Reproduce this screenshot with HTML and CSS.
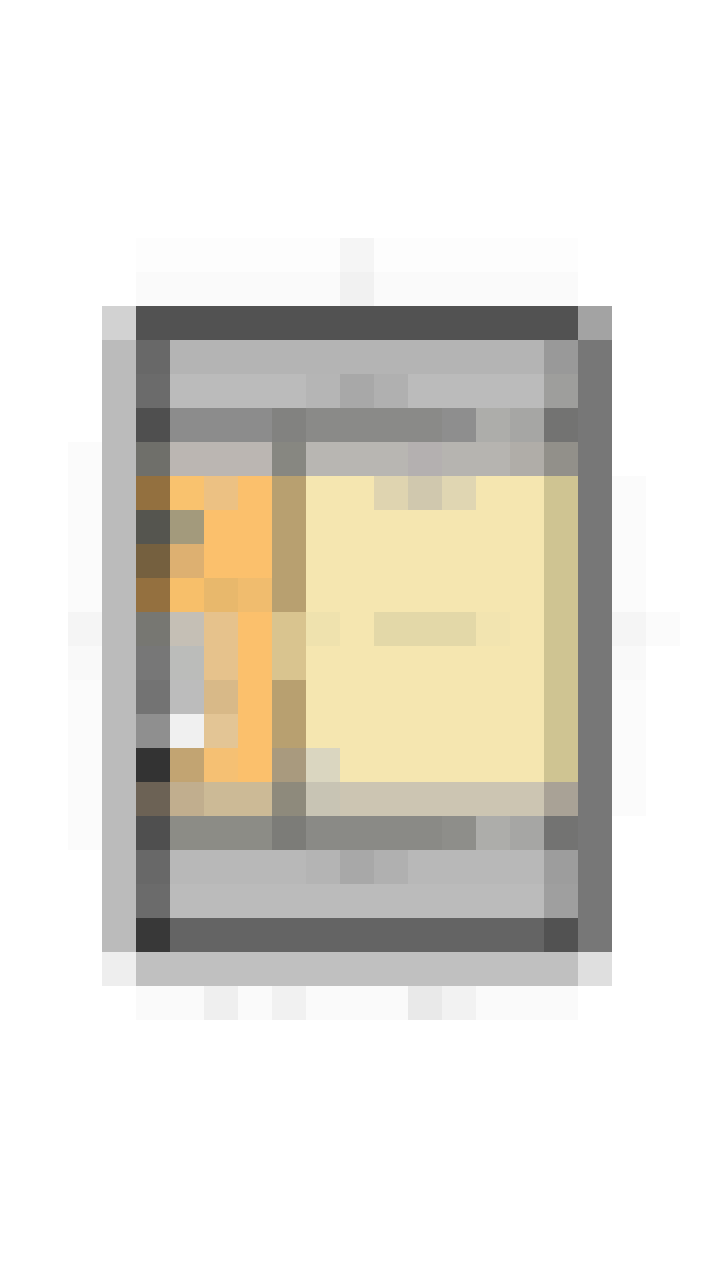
FILE: index.html
```html
<!DOCTYPE html>
<html lang="en">
<head>
<meta charset="utf-8">
<title>Pixel art</title>
<link rel="stylesheet" href="styles.css">
</head>
<body>
<svg class="art" viewBox="0 0 720 1280" width="720" height="1280" shape-rendering="crispEdges" xmlns="http://www.w3.org/2000/svg">
<!-- faint halo -->
<rect x="136" y="238" width="442" height="34" fill="#fdfdfd"/>
<rect x="340" y="238" width="34" height="34" fill="#f5f5f5"/>
<rect x="136" y="272" width="442" height="34" fill="#fafafa"/>
<rect x="340" y="272" width="34" height="34" fill="#f1f1f1"/>
<rect x="68" y="442" width="34" height="408" fill="#fbfbfb"/>
<rect x="68" y="612" width="34" height="34" fill="#f5f5f5"/>
<rect x="68" y="646" width="34" height="34" fill="#f9f9f9"/>
<rect x="612" y="476" width="34" height="340" fill="#fbfbfb"/>
<rect x="612" y="612" width="34" height="34" fill="#f5f5f5"/>
<rect x="646" y="612" width="34" height="34" fill="#fbfbfb"/>
<rect x="612" y="646" width="34" height="34" fill="#f9f9f9"/>
<rect x="136" y="986" width="442" height="34" fill="#fafafa"/>
<rect x="204" y="986" width="34" height="34" fill="#efefef"/>
<rect x="272" y="986" width="34" height="34" fill="#f1f1f1"/>
<rect x="408" y="986" width="34" height="34" fill="#e9e9e9"/>
<rect x="442" y="986" width="34" height="34" fill="#f2f2f2"/>
<!-- outer frame -->
<rect x="102" y="306" width="34" height="34" fill="#d2d2d2"/>
<rect x="136" y="306" width="442" height="34" fill="#525252"/>
<rect x="578" y="306" width="34" height="34" fill="#a3a3a3"/>
<rect x="102" y="340" width="34" height="612" fill="#bbbbbb"/>
<rect x="578" y="340" width="34" height="612" fill="#777777"/>
<rect x="102" y="952" width="34" height="34" fill="#eeeeee"/>
<rect x="136" y="952" width="442" height="34" fill="#c0c0c0"/>
<rect x="578" y="952" width="34" height="34" fill="#dfdfdf"/>
<!-- top band -->
<rect x="136" y="340" width="34" height="34" fill="#686868"/>
<rect x="170" y="340" width="374" height="34" fill="#b4b4b4"/>
<rect x="544" y="340" width="34" height="34" fill="#999999"/>
<rect x="136" y="374" width="34" height="34" fill="#6b6b6b"/>
<rect x="170" y="374" width="374" height="34" fill="#bbbbbb"/>
<rect x="306" y="374" width="34" height="34" fill="#b5b5b5"/>
<rect x="340" y="374" width="34" height="34" fill="#a8a8a8"/>
<rect x="374" y="374" width="34" height="34" fill="#b0b0b0"/>
<rect x="544" y="374" width="34" height="34" fill="#9e9e9c"/>
<rect x="136" y="408" width="34" height="34" fill="#4f4f4f"/>
<rect x="170" y="408" width="102" height="34" fill="#8c8c8c"/>
<rect x="272" y="408" width="34" height="34" fill="#828280"/>
<rect x="306" y="408" width="136" height="34" fill="#8a8a88"/>
<rect x="442" y="408" width="34" height="34" fill="#8e8e8e"/>
<rect x="476" y="408" width="34" height="34" fill="#adadaa"/>
<rect x="510" y="408" width="34" height="34" fill="#a6a6a4"/>
<rect x="544" y="408" width="34" height="34" fill="#737372"/>
<rect x="136" y="442" width="34" height="34" fill="#6f6f6a"/>
<rect x="170" y="442" width="102" height="34" fill="#bbb6b2"/>
<rect x="272" y="442" width="34" height="34" fill="#878781"/>
<rect x="306" y="442" width="102" height="34" fill="#b8b6b2"/>
<rect x="408" y="442" width="34" height="34" fill="#b4b0b0"/>
<rect x="442" y="442" width="68" height="34" fill="#b6b4b0"/>
<rect x="510" y="442" width="34" height="34" fill="#b0ada8"/>
<rect x="544" y="442" width="34" height="34" fill="#92908a"/>
<!-- spine column -->
<rect x="136" y="476" width="34" height="34" fill="#93703f"/>
<rect x="136" y="510" width="34" height="34" fill="#55554f"/>
<rect x="136" y="544" width="34" height="34" fill="#75603f"/>
<rect x="136" y="578" width="34" height="34" fill="#94703f"/>
<rect x="136" y="612" width="34" height="34" fill="#777772"/>
<rect x="136" y="646" width="34" height="34" fill="#777777"/>
<rect x="136" y="680" width="34" height="34" fill="#737373"/>
<rect x="136" y="714" width="34" height="34" fill="#8f8f8f"/>
<rect x="136" y="748" width="34" height="34" fill="#333333"/>
<rect x="136" y="782" width="34" height="34" fill="#6c6255"/>
<!-- orange panel -->
<rect x="170" y="476" width="102" height="306" fill="#fbc06c"/>
<rect x="170" y="476" width="34" height="34" fill="#f9c26e"/>
<rect x="204" y="476" width="34" height="34" fill="#ecc183"/>
<rect x="170" y="510" width="34" height="34" fill="#a39a7c"/>
<rect x="170" y="544" width="34" height="34" fill="#ddb071"/>
<rect x="170" y="578" width="34" height="34" fill="#f7bf6a"/>
<rect x="204" y="578" width="34" height="34" fill="#e8b86c"/>
<rect x="238" y="578" width="34" height="34" fill="#f0bc6e"/>
<rect x="170" y="612" width="34" height="34" fill="#c5bfb5"/>
<rect x="204" y="612" width="34" height="68" fill="#e6c28c"/>
<rect x="170" y="646" width="34" height="34" fill="#bbbcba"/>
<rect x="170" y="680" width="34" height="34" fill="#bcbcbc"/>
<rect x="204" y="680" width="34" height="34" fill="#d8b988"/>
<rect x="170" y="714" width="34" height="34" fill="#f0f0f0"/>
<rect x="204" y="714" width="34" height="34" fill="#e3c595"/>
<rect x="170" y="748" width="34" height="34" fill="#c2a472"/>
<rect x="204" y="748" width="34" height="34" fill="#f5c073"/>
<!-- divider column -->
<rect x="272" y="476" width="34" height="306" fill="#b8a070"/>
<rect x="272" y="612" width="34" height="68" fill="#d9c48f"/>
<rect x="272" y="748" width="34" height="34" fill="#a99a7e"/>
<!-- cream panel -->
<rect x="306" y="476" width="238" height="306" fill="#f5e6b0"/>
<rect x="374" y="476" width="34" height="34" fill="#dfd4b0"/>
<rect x="408" y="476" width="34" height="34" fill="#d0c8ae"/>
<rect x="442" y="476" width="34" height="34" fill="#e0d6b2"/>
<rect x="306" y="612" width="34" height="34" fill="#efe2ae"/>
<rect x="374" y="612" width="102" height="34" fill="#e3d8a8"/>
<rect x="476" y="612" width="34" height="34" fill="#f2e4b0"/>
<rect x="306" y="748" width="34" height="34" fill="#dad6c0"/>
<rect x="544" y="476" width="34" height="306" fill="#cfc492"/>
<!-- lower band -->
<rect x="170" y="782" width="34" height="34" fill="#c1ae8e"/>
<rect x="204" y="782" width="68" height="34" fill="#ccba96"/>
<rect x="272" y="782" width="34" height="34" fill="#8e8a7c"/>
<rect x="306" y="782" width="34" height="34" fill="#c8c4b4"/>
<rect x="340" y="782" width="204" height="34" fill="#ccc5b2"/>
<rect x="544" y="782" width="34" height="34" fill="#a9a296"/>
<rect x="136" y="816" width="34" height="34" fill="#4f4f4f"/>
<rect x="170" y="816" width="102" height="34" fill="#8c8c86"/>
<rect x="272" y="816" width="34" height="34" fill="#7c7c78"/>
<rect x="306" y="816" width="136" height="34" fill="#8a8a86"/>
<rect x="442" y="816" width="34" height="34" fill="#8e8e8a"/>
<rect x="476" y="816" width="34" height="34" fill="#adadaa"/>
<rect x="510" y="816" width="34" height="34" fill="#a6a6a4"/>
<rect x="544" y="816" width="34" height="34" fill="#737372"/>
<rect x="136" y="850" width="34" height="34" fill="#686868"/>
<rect x="170" y="850" width="374" height="34" fill="#b8b8b8"/>
<rect x="306" y="850" width="34" height="34" fill="#b4b4b4"/>
<rect x="340" y="850" width="34" height="34" fill="#a8a8a8"/>
<rect x="374" y="850" width="34" height="34" fill="#b0b0b0"/>
<rect x="544" y="850" width="34" height="34" fill="#9d9d9d"/>
<rect x="136" y="884" width="34" height="34" fill="#6b6b6b"/>
<rect x="170" y="884" width="374" height="34" fill="#bbbbbb"/>
<rect x="544" y="884" width="34" height="34" fill="#9f9f9f"/>
<rect x="136" y="918" width="34" height="34" fill="#383838"/>
<rect x="170" y="918" width="374" height="34" fill="#646464"/>
<rect x="544" y="918" width="34" height="34" fill="#525252"/>
</svg>
</body>
</html>
```

FILE: styles.css
```css
html,
body {
  margin: 0;
  padding: 0;
  background: #ffffff;
}

.art {
  display: block;
  width: 720px;
  height: 1280px;
}
```
